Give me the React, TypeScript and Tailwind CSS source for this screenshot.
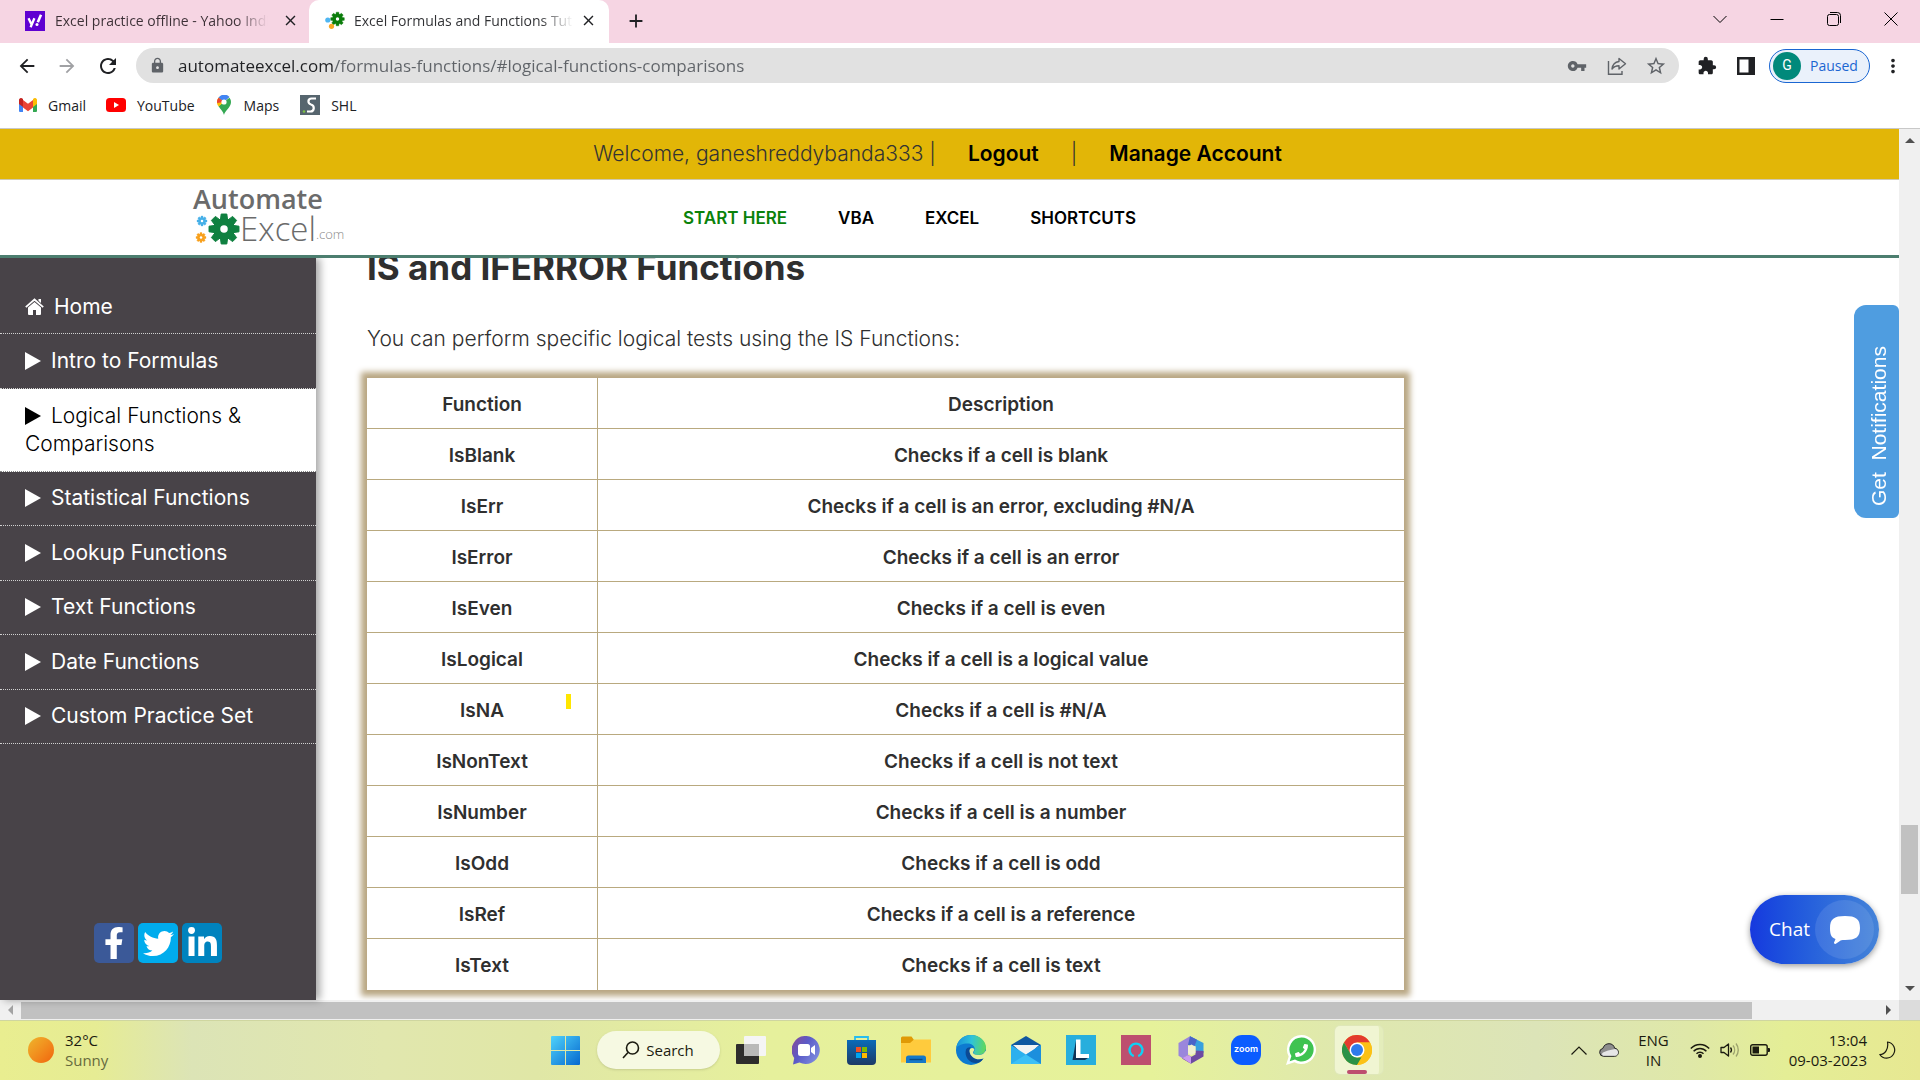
import React from "react";
import {
  MdArrowBack,
  MdArrowForward,
  MdRefresh,
  MdLock,
  MdVpnKey,
  MdStarBorder,
  MdExtension,
  MdMoreVert,
  MdClose,
  MdAdd,
} from "react-icons/md";
import { FaFacebookF, FaTwitter, FaLinkedinIn, FaPhoneAlt } from "react-icons/fa";

const rows: [string, string][] = [
  ["IsBlank", "Checks if a cell is blank"],
  ["IsErr", "Checks if a cell is an error, excluding #N/A"],
  ["IsError", "Checks if a cell is an error"],
  ["IsEven", "Checks if a cell is even"],
  ["IsLogical", "Checks if a cell is a logical value"],
  ["IsNA", "Checks if a cell is #N/A"],
  ["IsNonText", "Checks if a cell is not text"],
  ["IsNumber", "Checks if a cell is a number"],
  ["IsOdd", "Checks if a cell is odd"],
  ["IsRef", "Checks if a cell is a reference"],
  ["IsText", "Checks if a cell is text"],
];

const sections = [
  "Intro to Formulas",
  "Logical Functions & Comparisons",
  "Statistical Functions",
  "Lookup Functions",
  "Text Functions",
  "Date Functions",
  "Custom Practice Set",
];

function GearShape({ cx, cy, r, fill }: { cx: number; cy: number; r: number; fill: string }) {
  return (
    <g transform={`translate(${cx} ${cy}) scale(${r / 16})`}>
      {[0, 45, 90, 135].map((a) => (
        <path
          key={a}
          transform={`rotate(${a})`}
          d="M-3-16H3L4-9V9L3 16H-3L-4 9V-9Z"
          fill={fill}
          stroke={fill}
          strokeLinejoin="round"
        />
      ))}
      <circle r="11.5" fill={fill} />
      <circle r="4" fill="#fff" />
    </g>
  );
}

/* ---------- browser chrome ---------- */

function YahooIcon() {
  return (
    <svg viewBox="0 0 20 20" className="size-5 shrink-0">
      <rect width="20" height="20" fill="#5f01d1" />
      <path d="M3.5 7.2 6.3 13M9.4 7.2 5.6 16.2" stroke="#fff" strokeWidth="2.3" fill="none" />
      <path d="m12.8 11.2 3.2-7.4" stroke="#fff" strokeWidth="2.6" />
      <circle cx="12" cy="13.6" r="1.5" fill="#fff" />
    </svg>
  );
}

function GearsFavicon() {
  return (
    <svg viewBox="0 0 20 20" className="size-5 shrink-0">
      <GearShape cx={12.5} cy={8} r={6.8} fill="#0b7d0b" />
      <circle cx="2.8" cy="9" r="2.6" fill="#4fb6f2" />
      <circle cx="6.5" cy="15.3" r="2.6" fill="#f9a825" />
    </svg>
  );
}

function TabStrip() {
  return (
    <div className="flex h-[43px] shrink-0 items-stretch bg-[#f6d5e3] text-[#3c3036]">
      <div className="flex w-[309px] items-center gap-[10px] pr-[10px] pb-[2px] pl-[25px]">
        <YahooIcon />
        <span className="w-[219px] overflow-hidden bg-linear-to-r from-[#3c3036] from-85% to-transparent bg-clip-text text-[14px] whitespace-nowrap text-transparent">
          Excel practice offline - Yahoo India
        </span>
        <button aria-label="Close tab" className="ml-1 text-[#202124]">
          <MdClose className="size-[17px]" />
        </button>
      </div>
      <div className="flex w-[300px] items-center gap-[9px] rounded-t-[10px] bg-white pb-[2px] pl-4">
        <GearsFavicon />
        <span className="w-[219px] overflow-hidden bg-linear-to-r from-[#303134] from-85% to-transparent bg-clip-text text-[14px] whitespace-nowrap text-transparent">
          Excel Formulas and Functions Tutorial
        </span>
        <button aria-label="Close tab" className="-ml-[2px] text-[#202124]">
          <MdClose className="size-[17px]" />
        </button>
      </div>
      <button aria-label="New tab" className="ml-4 pb-[2px] text-[#202124]">
        <MdAdd className="size-[22px]" />
      </button>
      <div className="ml-auto flex items-center pb-[5px] text-black">
        <button aria-label="Search tabs" className="flex w-[57px] justify-center">
          <svg viewBox="0 0 14 14" className="size-[14px]" fill="none" stroke="currentColor">
            <path d="m.5 4 6.5 6.5L13.5 4" />
          </svg>
        </button>
        <button aria-label="Minimize" className="flex w-[57px] justify-center">
          <svg viewBox="0 0 14 14" className="size-[14px]" fill="none" stroke="currentColor">
            <path d="M.5 7.5h13" />
          </svg>
        </button>
        <button aria-label="Restore" className="flex w-[57px] justify-center">
          <svg viewBox="0 0 14 14" className="size-[14px]" fill="none" stroke="currentColor">
            <rect x=".5" y="2.500" width="11" height="11" rx="2" />
            <path d="M3 .5h7.500a3 3 0 0 1 3 3V11" />
          </svg>
        </button>
        <button aria-label="Close" className="flex w-[58px] justify-center">
          <svg viewBox="0 0 14 14" className="size-[14px]" fill="none" stroke="currentColor">
            <path d="m.5.5 13 13m0-13-13 13" />
          </svg>
        </button>
      </div>
    </div>
  );
}

function Toolbar() {
  return (
    <div className="flex h-[45px] shrink-0 items-center bg-white text-[#202124]">
      <button aria-label="Back" className="ml-4">
        <MdArrowBack className="size-[22px]" />
      </button>
      <button aria-label="Forward" className="ml-[18px] text-[#a0a1a4]">
        <MdArrowForward className="size-[22px]" />
      </button>
      <button aria-label="Reload" className="ml-[18px]">
        <MdRefresh className="size-6" />
      </button>
      <div className="ml-4 flex h-[35px] flex-1 items-center rounded-full bg-[#e1e1e1] pr-3 pl-[13px] text-[#5f6368]">
        <MdLock className="size-[17px]" />
        <input
          aria-label="Address"
          defaultValue="automateexcel.com/formulas-functions/#logical-functions-comparisons"
          className="ml-3 min-w-0 flex-1 bg-linear-to-r from-[#202124] from-[155px] to-[#5f6368] to-[155px] bg-clip-text text-[17px] text-transparent outline-none"
        />
        <button aria-label="Saved passwords">
          <MdVpnKey className="size-5" />
        </button>
        <button aria-label="Share this page" className="ml-5">
          <svg viewBox="0 0 20 20" className="size-5" fill="none" stroke="currentColor" strokeWidth="1.400">
            <path d="M1.500 5v13.300H15V15" />
            <path d="M12 2.500 18.500 7.800 12 13v-3.200c-3.500 0-5.500 1-7 3.200.5-4 2.800-7 7-7.500Z" strokeLinejoin="round" />
          </svg>
        </button>
        <button aria-label="Bookmark this tab" className="ml-[18px]">
          <MdStarBorder className="size-[22px]" />
        </button>
      </div>
      <button aria-label="Extensions" className="ml-[18px]">
        <MdExtension className="size-5" />
      </button>
      <button aria-label="Side panel" className="ml-5">
        <svg viewBox="0 0 18 18" className="size-[18px]">
          <path d="M0 0h18v18H0Zm2.500 2.500v13h9v-13Z" fill="currentColor" fillRule="evenodd" />
        </svg>
      </button>
      <button className="ml-[14px] flex h-[34px] w-[101px] items-center gap-[9px] rounded-full border border-[#1a66d2] bg-[#eaf1fb] pl-[3px] text-[14px] text-[#1a66d2]">
        <span className="flex size-7 items-center justify-center rounded-full bg-[#00897b] font-['Roboto'] text-[14px] text-white">
          G
        </span>
        Paused
      </button>
      <button aria-label="Menu" className="mr-4 ml-3">
        <MdMoreVert className="size-[22px]" />
      </button>
    </div>
  );
}

function Bookmarks() {
  return (
    <div className="flex h-[41px] shrink-0 items-center border-b border-[#c8c8c8] bg-white pb-[6px] pl-[19px] text-[14px] text-[#202124]">
      <a href="#gmail" className="flex items-center gap-[11px]">
        <svg viewBox="0 0 18 14" className="h-[14px] w-[18px]">
          <path d="M0 2v11a1 1 0 0 0 1 1h3V4.500Z" fill="#4285f4" />
          <path d="M18 2v11a1 1 0 0 1-1 1h-3V4.500Z" fill="#34a853" />
          <path d="M4 9.500V2l5 3.800L14 2v7.500l-5 3.800Z" fill="#ea4335" />
          <path d="M0 2C0 .3 2-.6 3.300.4L4 1v8L0 6Z" fill="#c5221f" />
          <path d="M18 2c0-1.700-2-2.600-3.300-1.600L14 1v8l4-3Z" fill="#fbbc04" />
        </svg>
        Gmail
      </a>
      <a href="#youtube" className="ml-5 flex items-center gap-[11px]">
        <svg viewBox="0 0 20 14" className="h-[14px] w-5">
          <rect width="20" height="14" rx="3.500" fill="#f00" />
          <path d="m8 4 5 3-5 3Z" fill="#fff" />
        </svg>
        YouTube
      </a>
      <a href="#maps" className="ml-[22px] flex items-center gap-[13px]">
        <svg viewBox="0 0 14 20" className="h-5 w-[14px]">
          <path d="M7 20c.7-4 7-7.500 7-13A7 7 0 0 0 12.500 2.700L1.500 11C3 14 6.300 16.500 7 20Z" fill="#34a853" />
          <path d="M1.700 11.500 12 1.900A7 7 0 0 0 1.500 2.800 7 7 0 0 0 1.700 11.500Z" fill="#fbbc04" />
          <path d="M1.500 2.700 7 7l5.500-5A7 7 0 0 0 1.500 2.700Z" fill="#4285f4" />
          <path d="M1.500 2.700A7 7 0 0 0 .1 8L7 7Z" fill="#ea4335" />
          <circle cx="7" cy="7" r="2.600" fill="#fff" />
        </svg>
        Maps
      </a>
      <a href="#shl" className="ml-[21px] flex items-center gap-[11px]">
        <svg viewBox="0 0 20 20" className="size-5">
          <rect width="20" height="20" fill="#56656e" />
          <path
            d="M16 3.500h-4.500c-4 0-4 5-.5 6 4 1 3.500 7-.5 7H7"
            fill="none"
            stroke="#fff"
            strokeWidth="2.200"
          />
          <circle cx="4" cy="16.500" r="1.300" fill="#7bc143" />
        </svg>
        SHL
      </a>
    </div>
  );
}

/* ---------- web page ---------- */

function SiteHeader() {
  return (
    <header className="relative z-10 shrink-0">
      <div className="flex h-[51px] items-center justify-center border-b border-[#cfc9b0] bg-[#e2b607] pr-6 text-[21px] text-black">
        <span className="font-light text-[#333]">Welcome, ganeshreddybanda333 |</span>
        <a href="#logout" className="ml-8 font-semibold">
          Logout
        </a>
        <span className="mx-8 font-light text-[#333]">|</span>
        <a href="#account" className="font-semibold">
          Manage Account
        </a>
      </div>
      <div className="flex h-[78px] items-center border-b-3 border-[#4c7e6f] bg-white pl-[193px]">
        <a
          href="#home"
          aria-label="AutomateExcel.com"
          className="flex w-[160px] flex-col pb-[6px] font-['Open_Sans'] text-[#6b6b6b]"
        >
          <span className="text-[27px] leading-7 font-semibold">Automate</span>
          <span className="flex h-8 items-center">
            <svg viewBox="0 0 47 32" className="h-8 w-[47px]">
              <GearShape cx={31} cy={16} r={15} fill="#0f8040" />
              <GearShape cx={9} cy={8} r={5} fill="#46b0e8" />
              <GearShape cx={8} cy={24.5} r={5} fill="#f8a01c" />
            </svg>
            <span className="text-[33px] leading-8 font-light">Excel</span>
            <span className="pt-3 text-[13px] font-light text-[#8a8a8a]">.com</span>
          </span>
        </a>
        <nav className="ml-[330px] flex gap-[51px] pt-[2px] text-[17px] font-semibold text-black">
          <a href="#start" className="text-[#0a820a]">
            START HERE
          </a>
          <a href="#vba">VBA</a>
          <a href="#excel">EXCEL</a>
          <a href="#shortcuts">SHORTCUTS</a>
        </nav>
      </div>
    </header>
  );
}

function Sidebar() {
  return (
    <aside className="z-[5] flex w-[316px] shrink-0 flex-col bg-[#484348] text-[21px] leading-7 text-white shadow-[4px_0_8px_rgba(0,0,0,0.35)]">
      <a href="#home" className="flex h-[76px] items-end gap-[10px] border-b border-dotted border-[#d0d0d0] pb-3 pl-[25px]">
        <svg viewBox="0 0 19 17" className="mb-[6px] h-[17px] w-[19px]" fill="currentColor">
          <path d="M9.500 4 16 9.500V16a1 1 0 0 1-1 1h-4v-5H8v5H4a1 1 0 0 1-1-1V9.500Z" />
          <path d="M13.500 1H16v4l-2.500-2.200Z" />
          <path d="m.8 9.200 8.700-7.700 8.700 7.700" fill="none" stroke="currentColor" strokeWidth="1.800" />
        </svg>
        Home
      </a>
      <nav className="flex h-[410px] flex-col">
        {sections.map((name) => {
          const active = name.startsWith("Logical");
          return (
            <a
              key={name}
              href="#section"
              className={
                active
                  ? "flex h-[83px] shrink-0 items-center border-b border-dotted border-[#888] bg-white pr-12 pl-[25px] font-light text-black"
                  : "flex flex-1 items-center border-b border-dotted border-[#d0d0d0] pr-5 pl-[25px]"
              }
            >
              <span>
                <svg viewBox="0 0 16 18" className="mr-[10px] inline h-[18px] w-4 align-[-2px]">
                  <path d="M0 0 16 9 0 18Z" fill="currentColor" />
                </svg>
                {name}
              </span>
            </a>
          );
        })}
      </nav>
      <div className="mt-auto flex justify-center gap-1 pb-[37px]">
        <a href="#facebook" aria-label="Facebook" className="flex size-10 items-center justify-center rounded-[5px] bg-[#3b5998]">
          <FaFacebookF className="size-8" />
        </a>
        <a href="#twitter" aria-label="Twitter" className="flex size-10 items-center justify-center rounded-[5px] bg-[#00aced]">
          <FaTwitter className="size-[31px]" />
        </a>
        <a href="#linkedin" aria-label="LinkedIn" className="flex size-10 items-center justify-center rounded-[5px] bg-[#0083be]">
          <FaLinkedinIn className="size-[33px]" />
        </a>
      </div>
    </aside>
  );
}

function Content() {
  return (
    <main className="min-w-0 flex-1 overflow-hidden bg-white pl-[51px] text-[#2f2f2f]">
      <h2 className="-mt-[11px] text-[35px] leading-10 font-bold">IS and IFERROR Functions</h2>
      <p className="mt-[38px] text-[21px] leading-7 font-light">
        You can perform specific logical tests using the IS Functions:
      </p>
      <table className="mt-[25px] w-[1037px] border-separate border-spacing-0 text-center text-[19px] leading-6 font-semibold shadow-[0_0_6px_6px_#b9a783]">
        <thead>
          <tr className="h-[51px]">
            <th className="w-[231px] border-r border-b border-[#b9a97f] pt-1 font-semibold">Function</th>
            <th className="border-b border-[#b9a97f] pt-1 font-semibold">Description</th>
          </tr>
        </thead>
        <tbody>
          {rows.map(([fn, desc], i) => (
            <tr key={fn} className="h-[51px]">
              <td
                className={
                  i === rows.length - 1
                    ? "relative border-r border-[#b9a97f] pt-[3px]"
                    : "relative border-r border-b border-[#b9a97f] pt-[3px]"
                }
              >
                {fn}
                {fn === "IsNA" && <span className="absolute top-[10px] right-[26px] h-[15px] w-[5px] bg-[#ffe600]" />}
              </td>
              <td className={i === rows.length - 1 ? "pt-[3px]" : "border-b border-[#b9a97f] pt-[3px]"}>{desc}</td>
            </tr>
          ))}
        </tbody>
      </table>
    </main>
  );
}

function VerticalScrollbar() {
  return (
    <div className="flex w-[21px] shrink-0 flex-col items-center bg-[#f0f0f0] text-[#505050]">
      <svg viewBox="0 0 10 5" className="mt-[9px] h-[5px] w-[10px]">
        <path d="M0 5 5 0l5 5Z" fill="currentColor" />
      </svg>
      <div className="mt-auto mb-[92px] h-[69px] w-[17px] bg-[#c1c1c1]" />
      <svg viewBox="0 0 10 5" className="mb-[9px] h-[5px] w-[10px]">
        <path d="M0 0 5 5l5-5Z" fill="currentColor" />
      </svg>
    </div>
  );
}

function HorizontalScrollbar() {
  return (
    <div className="flex h-5 shrink-0 items-center bg-[#f0f0f0]">
      <svg viewBox="0 0 5 10" className="ml-2 h-[10px] w-[5px] text-[#a3a3a3]">
        <path d="M5 0 0 5l5 5Z" fill="currentColor" />
      </svg>
      <div className="mr-[134px] ml-2 h-[17px] flex-1 bg-[#c1c1c1]" />
      <svg viewBox="0 0 5 10" className="mr-2 h-[10px] w-[5px] text-[#505050]">
        <path d="m0 0 5 5-5 5Z" fill="currentColor" />
      </svg>
      <div className="h-5 w-[21px] bg-[#dcdcdc]" />
    </div>
  );
}

/* ---------- taskbar ---------- */

function WindowsIcon() {
  return (
    <svg viewBox="0 0 29 29" className="size-[29px]">
      <defs>
        <linearGradient id="win" x1="0" y1="0" x2="1" y2="1">
          <stop offset="0" stopColor="#4fd3fb" />
          <stop offset="1" stopColor="#0668cf" />
        </linearGradient>
      </defs>
      <path
        d="M1 0h13v14H0V1a1 1 0 0 1 1-1Zm14 0h13a1 1 0 0 1 1 1v13H15ZM0 15h14v14H1a1 1 0 0 1-1-1Zm15 0h14v13a1 1 0 0 1-1 1H15Z"
        fill="url(#win)"
      />
    </svg>
  );
}

function TaskViewIcon() {
  return (
    <svg viewBox="0 0 30 28" className="h-7 w-[30px]">
      <rect y="8" width="23" height="20" rx="1" fill="#2e2d2c" />
      <rect x="8" width="22" height="20" rx="1" fill="#f5f5f5" />
      <rect x="8" y="8" width="15" height="12" fill="#b9b9b8" />
    </svg>
  );
}

function TeamsIcon() {
  return (
    <svg viewBox="0 0 29 29" className="size-[29px]">
      <defs>
        <linearGradient id="teams" x1="0" y1="0" x2="1" y2=".6">
          <stop offset="0" stopColor="#8b4a94" />
          <stop offset=".5" stopColor="#5b5bc8" />
          <stop offset="1" stopColor="#7b88dc" />
        </linearGradient>
      </defs>
      <path d="M14.500 0a14 14 0 1 1-7 26.500L1 28.500l1.200-6.500A14 14 0 0 1 14.500 0Z" fill="url(#teams)" />
      <rect x="6" y="8" width="12" height="12" rx="2.500" fill="#fff" />
      <path d="m19 12 4-3v10l-4-3Z" fill="#fff" />
    </svg>
  );
}

function StoreIcon() {
  return (
    <svg viewBox="0 0 29 29" className="size-[29px]">
      <defs>
        <linearGradient id="store" x1="0" y1="0" x2="0" y2="1">
          <stop offset="0" stopColor="#0a6bb8" />
          <stop offset="1" stopColor="#1d3a66" />
        </linearGradient>
      </defs>
      <path d="M8 6V1h13v5" fill="none" stroke="#27bdf0" strokeWidth="1.800" />
      <path d="M0 4h29v21a4 4 0 0 1-4 4H4a4 4 0 0 1-4-4Z" fill="url(#store)" />
      <path d="M9 11h5v5H9Z" fill="#f25022" />
      <path d="M15 11h5v5h-5Z" fill="#7fba00" />
      <path d="M9 17h5v5H9Z" fill="#00a4ef" />
      <path d="M15 17h5v5h-5Z" fill="#ffb900" />
    </svg>
  );
}

function FolderIcon() {
  return (
    <svg viewBox="0 0 30 28" className="h-7 w-[30px]">
      <path d="M0 2a1.500 1.500 0 0 1 1.500-1.500h9L13 4v5H0Z" fill="#e09a06" />
      <path d="M0 7h9l4-3.500h17v23H0Z" fill="#ffcb3d" />
      <path d="M5 27v-5a2.500 2.500 0 0 1 2.500-2.500h15A2.500 2.500 0 0 1 25 22v5Z" fill="#1678c8" />
      <path d="M8.500 23.500h13" stroke="#0b4a86" strokeWidth="1.400" />
    </svg>
  );
}

function EdgeIcon() {
  return (
    <svg viewBox="0 0 30 30" className="size-[30px]">
      <defs>
        <linearGradient id="edgeTop" x1="0" y1=".4" x2="1" y2=".5">
          <stop offset="0" stopColor="#1690dc" />
          <stop offset=".5" stopColor="#2fc3d8" />
          <stop offset="1" stopColor="#62d95a" />
        </linearGradient>
      </defs>
      <circle cx="15" cy="15" r="15" fill="#0d7ad0" />
      <path
        d="M.2 13C1.500 5 7.500 0 15 0c8.500 0 15 6 15 12.500 0 4.500-3.500 7.500-7.500 7.500-3 0-5-1.200-5-2.500 0-1 1.300-1.500 1.300-3.500 0-3-3-5.500-7-5.500C6.500 8.500 2 10.500.2 13Z"
        fill="url(#edgeTop)"
      />
      <path d="M10 14.500c-2 7 3 13.500 10 13.500 3 0 5.500-1.500 7.500-4.500C21 26 14 22.500 13.500 16c0-2 1-3.300 1.500-3.500-2-.5-4 .5-5 2Z" fill="#0c4a94" />
      <path
        d="M13.500 16c.5 6.500 7.500 10 14 7.500l3-2V15l-3 3.500c-1.500 1-3.500 1.500-5.500 1.500-3 0-5-1.200-5-2.500 0-1 1.300-1.500 1.300-3.500-1.800-1.800-4.800-1-4.800 2Z"
        fill="#e7f29d"
      />
    </svg>
  );
}

function MailIcon() {
  return (
    <svg viewBox="0 0 30 28" className="h-7 w-[30px]">
      <path d="M0 9 15 0l15 9v6H0Z" fill="#0f57a0" />
      <path d="M2 9h26L15 21Z" fill="#f3f3f3" />
      <path d="M0 9v19h30Z" fill="#2cb0ee" />
      <path d="M30 9v19H0l15-9.500Z" fill="#3cc0f6" />
      <path d="m15 18.500 15 9.500V9Z" fill="#1c8fdd" />
    </svg>
  );
}

function LightshotIcon() {
  return (
    <svg viewBox="0 0 30 30" className="size-[30px]">
      <rect width="30" height="30" fill="#27aedd" />
      <path d="M6.500 25 10 5.500l4 1V20l8 3-3 2Z" fill="#0f3356" />
      <path d="M10 4.500h4.500V19H23v4H10Z" fill="#fff" />
    </svg>
  );
}

function AlexaIcon() {
  return (
    <svg viewBox="0 0 30 30" className="size-[30px]">
      <rect width="30" height="30" fill="#bd4f6f" />
      <path d="M12.800 21.200a6.500 6.500 0 1 1 4.400 0" fill="none" stroke="#0fd0f5" strokeWidth="2.400" />
    </svg>
  );
}

function OfficeIcon() {
  return (
    <svg viewBox="0 0 28 28" className="size-7">
      <path d="M1.500 7 13 .3l5 2.700-7 6v10l-5.500 3.200-4-2.500Z" fill="#9a86dc" />
      <path d="M13 .3 26.500 7v10l-8-2.500V10L11 9l2-3Z" fill="#38a0de" />
      <path d="m13 .3 7 3.500-2.500 6.200L11 9Z" fill="#4a63c8" />
      <path d="M26.500 15v5.500L14 27.700 5 22.500l6-3.500 3.500 1.800 4-2.300v-4Z" fill="#6d4aa2" />
      <path d="m1.500 19.500 4 2.500 5.500-3 3 1.500v7.200Z" fill="#c89af0" />
      <path d="m11 10.500 3.500-2 4 2.200v6L14.500 19 11 17.200Z" fill="#f0f0d0" />
    </svg>
  );
}

function WhatsAppIcon() {
  return (
    <span className="relative flex size-[30px] items-center justify-center">
      <svg viewBox="0 0 30 30" className="absolute inset-0 size-[30px]">
        <path d="M15.500 0a14.500 14.500 0 1 1-7 27.200L0 30l2.700-8.500A14.500 14.500 0 0 1 15.500 0Z" fill="#fff" />
        <path d="M15.500 2.500a12 12 0 1 1-6.500 22l-5.300 1.800L5.400 21A12 12 0 0 1 15.500 2.500Z" fill="#3fc351" />
      </svg>
      <FaPhoneAlt className="relative size-[13px] -scale-x-100 text-white" />
    </span>
  );
}

function ChromeIcon() {
  return (
    <svg viewBox="0 0 30 30" className="size-[30px]">
      <circle cx="15" cy="15" r="15" fill="#fbc116" />
      <path d="M2 7.500A15 15 0 0 1 28 7.500H15L8.500 18.800Z" fill="#e33b2e" />
      <path d="M2 7.500 8.500 18.800l6.500 3.700h6.500L15 30A15 15 0 0 1 2 7.500Z" fill="#2a9247" />
      <path d="M15 30 21.500 18.800V11L28 7.500A15 15 0 0 1 15 30Z" fill="#fbc116" />
      <path d="M15 7.500h13l-6 4Z" fill="#fbc116" />
      <circle cx="15" cy="15" r="7.500" fill="#fff" />
      <circle cx="15" cy="15" r="6" fill="#2f7bea" />
    </svg>
  );
}

function Cell({ label, children }: { label: string; children: React.ReactNode }) {
  return (
    <button aria-label={label} className="flex h-[58px] w-[55px] items-center justify-center">
      {children}
    </button>
  );
}

function Taskbar() {
  return (
    <footer className="grid h-[60px] shrink-0 grid-cols-[1fr_auto_1fr] items-center border-t border-[#cfd6a0] bg-[linear-gradient(90deg,#e9ee90_0%,#e6ec94_5%,#dce4b6_10%,#e1e7ae_20%,#e0e7a6_28%,#e6f09c_40%,#e6f29a_60%,#dfe8ae_70%,#dce4b8_80%,#dfe8a8_88%,#e4ee96_93%,#e7e892_100%)] pb-[2px] text-[15px] leading-5 text-[#1b1b10]">
      <button className="flex items-center gap-[11px] pl-7 text-left">
        <span className="size-[26px] rounded-full bg-linear-to-br from-[#eeb52c] to-[#f0620c]" />
        <span className="flex flex-col">
          <span>32°C</span>
          <span className="text-[#666a3e]">Sunny</span>
        </span>
      </button>
      <div className="flex items-center">
        <Cell label="Start">
          <WindowsIcon />
        </Cell>
        <button className="mx-1 flex h-[38px] w-[123px] items-center justify-center gap-[6px] rounded-full bg-[#f6f9e2] text-[15px] shadow-sm">
          <svg viewBox="0 0 18 18" className="size-[18px]" fill="none" stroke="currentColor" strokeWidth="1.600">
            <circle cx="10.500" cy="7" r="6" />
            <path d="m6 11.500-5 5.500" />
          </svg>
          Search
        </button>
        <Cell label="Task view">
          <TaskViewIcon />
        </Cell>
        <Cell label="Chat">
          <TeamsIcon />
        </Cell>
        <Cell label="Microsoft Store">
          <StoreIcon />
        </Cell>
        <Cell label="File Explorer">
          <FolderIcon />
        </Cell>
        <Cell label="Edge">
          <EdgeIcon />
        </Cell>
        <Cell label="Mail">
          <MailIcon />
        </Cell>
        <Cell label="L">
          <LightshotIcon />
        </Cell>
        <Cell label="Alexa">
          <AlexaIcon />
        </Cell>
        <Cell label="Office">
          <OfficeIcon />
        </Cell>
        <Cell label="Zoom">
          <span className="flex size-[30px] items-center justify-center rounded-[11px] bg-[#0b5cff] pb-[2px] font-['Inter'] text-[9px] font-semibold text-white">
            zoom
          </span>
        </Cell>
        <Cell label="WhatsApp">
          <WhatsAppIcon />
        </Cell>
        <button
          aria-label="Chrome"
          className="relative ml-[6px] flex h-12 w-12 items-center justify-center rounded-[5px] border-r-4 border-[#e4edbb] bg-[#f0f5d2] ring-1 ring-[#dfe7b8]"
        >
          <ChromeIcon />
          <span className="absolute bottom-0 h-1 w-5 rounded-full bg-[#bd4f6f]" />
        </button>
      </div>
      <div className="flex items-center justify-end pr-6">
        <button aria-label="Show hidden icons">
          <svg viewBox="0 0 16 9" className="h-[9px] w-4" fill="none" stroke="currentColor" strokeWidth="1.200">
            <path d="m.5 8.500 7.500-7.500 7.500 7.500" />
          </svg>
        </button>
        <svg viewBox="0 0 20 14" className="ml-3 h-[14px] w-5">
          <path
            d="M4.500 13.300a4 4 0 0 1-.7-7.900C5 2 7.500.7 10 .7c3 0 5 1.700 5.600 4.500 5 .3 5 8.100 0 8.100Z"
            fill="#8d8d8d"
            stroke="#222"
          />
          <path d="M4.500 12.800c-2-.5-2-3 0-3.600L9 7.500l7-1.500c4 .3 4 6.800 0 6.800Z" fill="#e6e6e6" />
        </svg>
        <button className="ml-[19px] flex flex-col text-center">
          <span>ENG</span>
          <span>IN</span>
        </button>
        <svg viewBox="0 0 20 16" className="ml-[21px] h-4 w-5" fill="none" stroke="currentColor" strokeWidth="1.400">
          <path d="M.8 6.500a12.500 12.500 0 0 1 18.400 0M3.600 9.300a8.600 8.600 0 0 1 12.800 0M6.500 11.800a4.700 4.700 0 0 1 7 0" />
          <circle cx="10" cy="14" r="1.300" fill="currentColor" />
        </svg>
        <svg viewBox="0 0 20 16" className="ml-[10px] h-4 w-5" fill="none" stroke="currentColor" strokeWidth="1.300">
          <path d="M1 5.500v5h3L8.500 14V2L4 5.500Z" strokeLinejoin="round" />
          <path d="M10.500 5.500a4 4 0 0 1 0 5" />
          <path d="M13 3.500a7 7 0 0 1 0 9M16 1.500a10.500 10.500 0 0 1 0 13" opacity=".35" />
        </svg>
        <svg viewBox="0 0 20 12" className="ml-[10px] h-3 w-5">
          <rect x=".7" y=".7" width="16.500" height="10.600" rx="2" fill="none" stroke="currentColor" strokeWidth="1.400" />
          <rect x="2.500" y="2.500" width="6.500" height="7" fill="currentColor" />
          <path d="M18 4h1a1 1 0 0 1 1 1v2a1 1 0 0 1-1 1h-1Z" fill="currentColor" />
        </svg>
        <button className="ml-[19px] flex flex-col text-right">
          <span>13:04</span>
          <span>09-03-2023</span>
        </button>
        <svg viewBox="0 0 17 18" className="ml-3 h-[18px] w-[17px]" fill="none" stroke="currentColor" strokeWidth="1.200">
          <path d="M8.500 1a8.100 8.100 0 1 1-7.700 12.500C6 13.500 9.800 8 8.500 1Z" strokeLinejoin="round" />
        </svg>
      </div>
    </footer>
  );
}

export default function App() {
  return (
    <div className="flex h-screen flex-col overflow-hidden bg-white font-['Open_Sans','Noto_Sans',sans-serif]">
      <TabStrip />
      <Toolbar />
      <Bookmarks />
      <div className="flex min-h-0 flex-1">
        <div className="relative flex min-w-0 flex-1 flex-col font-['Inter',sans-serif]">
          <SiteHeader />
          <div className="flex min-h-0 flex-1">
            <Sidebar />
            <Content />
          </div>
          <button className="absolute top-44 right-0 z-20 flex h-[213px] w-[45px] rotate-180 items-center rounded-l-md rounded-r-xl bg-[#4f9de0] pt-3 pr-1 font-['Liberation_Sans'] text-[21px] whitespace-pre text-white [writing-mode:vertical-rl]">
            {"Get  Notifications"}
          </button>
          <button className="absolute right-5 bottom-9 z-20 flex h-[69px] w-[129px] items-center justify-end gap-[5px] rounded-full bg-linear-to-r from-[#1738de] to-[#4583d8] pr-[5px] font-['Open_Sans'] text-[19px] text-white shadow-[0_2px_6px_rgba(0,0,0,0.4)]">
            Chat
            <span className="flex size-[59px] items-center justify-center rounded-full bg-white/10">
              <svg viewBox="0 0 30 28" className="h-7 w-[30px]">
                <path
                  d="M15 0c11 0 15 3 15 12s-4 12-15 12c-2 0-3 0-4 .3L5.500 28c-1.500 0-2-1.500-1-2.500l1-2.500C1 21.500 0 18 0 12 0 3 4 0 15 0Z"
                  fill="#fff"
                />
              </svg>
            </span>
          </button>
        </div>
        <VerticalScrollbar />
      </div>
      <HorizontalScrollbar />
      <Taskbar />
    </div>
  );
}
